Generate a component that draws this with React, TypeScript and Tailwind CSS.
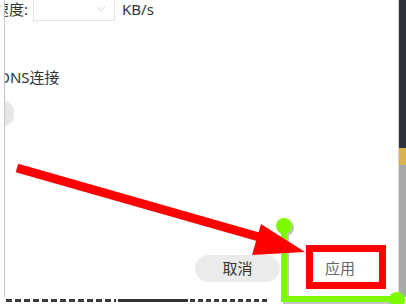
import { ChevronDown } from 'lucide-react';

const font = { fontFamily: '"Noto Sans", "Noto Sans CJK SC", sans-serif' };

/** Markup layer: red arrow + box and the green connector drawn over the dialog */
function Annotations() {
  return (
    <svg className="absolute inset-0 pointer-events-none" width={406} height={304} viewBox="0 0 406 304">
      {/* green connector, with a soft shadow */}
      <g opacity={0.35} transform="translate(2 2)">
        <path d="M284 226 V299 H397" stroke="#555" strokeWidth={6} fill="none" />
        <circle cx={284} cy={226} r={8} fill="#555" />
      </g>
      <path d="M284 226 V299 H397" stroke="#7dfa00" strokeWidth={6} fill="none" />
      <circle cx={284} cy={226} r={8} fill="#7dfa00" />
      <circle cx={397} cy={300} r={8} fill="#7dfa00" />

      {/* red arrow */}
      <line x1={17} y1={168} x2={266} y2={239} stroke="#ff0000" strokeWidth={9} />
      <polygon points="261,224 252,255 305,252" fill="#ff0000" />

      {/* red highlight box */}
      <rect x={309.5} y={248.5} width={73} height={37} fill="none" stroke="#ff0000" strokeWidth={7} />
    </svg>
  );
}

export default function App() {
  return (
    <div className="relative w-[406px] h-[304px] overflow-hidden bg-white flex flex-col" style={font}>
      <div className="flex flex-1 min-h-0">
        {/* page edge left of the dialog */}
        <div className="w-[4px] shrink-0 bg-white" />

        {/* dialog */}
        <div className="flex-1 min-w-0 overflow-hidden border-l border-[#c4c4c4] flex flex-col text-[15px] text-[#333]">
          {/* speed limit row */}
          <div className="flex items-center h-[22px] mt-[-2px] relative">
            <span className="ml-[-11px] leading-none whitespace-nowrap">速度:</span>
            <div className="ml-[5px] shrink-0 w-[82px] h-[23px] border border-[#e2e2e2] flex items-center justify-end pr-[6px]">
              <ChevronDown size={14} strokeWidth={1.5} className="text-[#c8c8c8]" />
            </div>
            <span className="ml-[7px] leading-none">KB/s</span>
            <div className="absolute top-0 left-[112px] right-0 h-px bg-[#cfcfcf]" />
          </div>

          {/* DNS row */}
          <div className="mt-[47px] h-[20px] flex items-center">
            <span className="ml-[-6px] leading-none whitespace-nowrap">DNS连接</span>
          </div>

          {/* switch, cut off on the left */}
          <div className="mt-[14px] flex">
            <div className="ml-[-13px] shrink-0 w-[22px] h-[25px] rounded-full bg-[#e6e6e6]" />
          </div>

          <div className="flex-1" />

          {/* footer buttons */}
          <div className="flex items-center justify-end pr-[14px] gap-[16px] mb-[15px]">
            <button className="w-[85px] h-[27px] rounded-full bg-[#ebebeb] text-[15px] text-[#333]">取消</button>
            <button className="w-[88px] h-[27px] bg-white text-[15px] text-[#666]">应用</button>
          </div>
        </div>

        {/* window behind, on the right */}
        <div className="w-[8px] shrink-0 flex flex-col border-l border-[#d8d8d8]">
          <div className="h-[148px] bg-[#30323a]" />
          <div className="h-[17px] bg-[#d9b24c]" />
          <div className="flex-1 bg-[#a7a9a8]" />
        </div>
      </div>

      {/* taskbar text strip at the bottom */}
      <div className="h-[7px] shrink-0 bg-white flex items-end pb-[2px] gap-[2px] pl-[6px]">
        <div className="w-[110px] h-[3px] bg-[repeating-linear-gradient(90deg,#3a3a3a_0_6px,transparent_6px_9px)]" />
        <div className="w-[70px] h-[3px] bg-[#333]" />
        <div className="w-[80px] h-[3px] bg-[repeating-linear-gradient(90deg,#3a3a3a_0_5px,transparent_5px_8px)]" />
      </div>

      <Annotations />
    </div>
  );
}
